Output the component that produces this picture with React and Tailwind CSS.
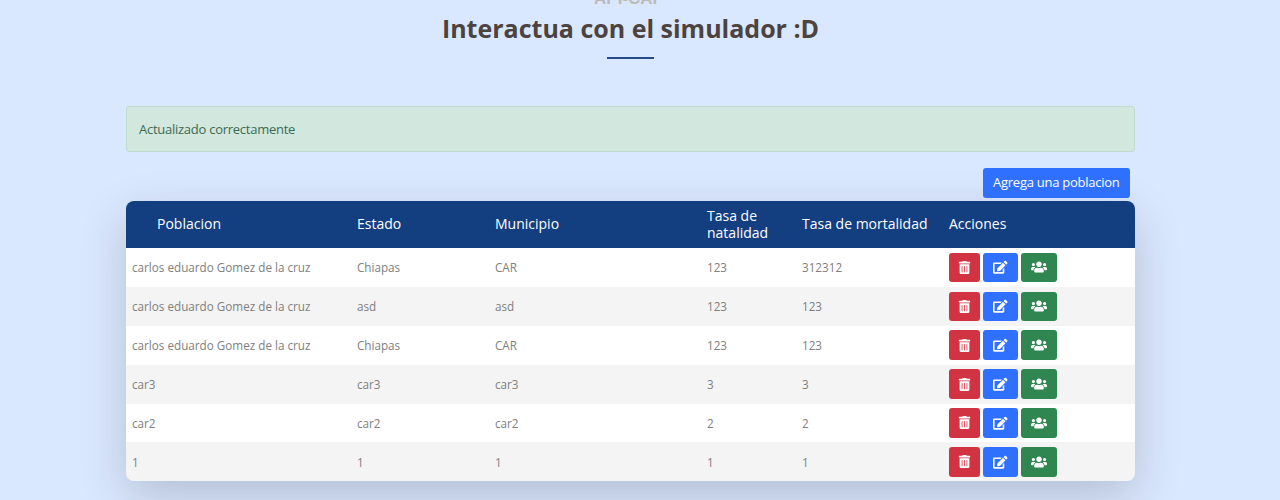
import { FaTrashAlt, FaEdit, FaUsers } from "react-icons/fa";

const columns =
  "grid grid-cols-[225px_138px_212px_95px_147px_1fr] items-center pl-[6px]";

const rows = [
  ["carlos eduardo Gomez de la cruz", "Chiapas", "CAR", "123", "312312"],
  ["carlos eduardo Gomez de la cruz", "asd", "asd", "123", "123"],
  ["carlos eduardo Gomez de la cruz", "Chiapas", "CAR", "123", "123"],
  ["car3", "car3", "car3", "3", "3"],
  ["car2", "car2", "car2", "2", "2"],
  ["1", "1", "1", "1", "1"],
];

function Actions() {
  return (
    <div className="flex gap-[3px] text-white">
      <button className="flex h-[29.5px] w-[31px] items-center justify-center rounded-[3px] bg-[#d23343]">
        <FaTrashAlt size={13} />
      </button>
      <button className="flex h-[29.5px] w-[34.5px] items-center justify-center rounded-[3px] bg-[#2f70ff]">
        <FaEdit size={14.5} />
      </button>
      <button className="flex h-[29.5px] w-[36px] items-center justify-center rounded-[3px] bg-[#308650]">
        <FaUsers size={16} />
      </button>
    </div>
  );
}

export default function App() {
  return (
    <div className="h-[500px] overflow-hidden bg-[#dae8ff] font-['Open_Sans','Noto_Sans',sans-serif]">
      <header className="flex flex-col items-center pr-[19px]">
        <div className="-mt-[11px] h-[19px] pr-[3px] font-['Liberation_Sans',sans-serif] text-[17px] leading-[20px] font-bold text-[#bdbab8]">
          API-CAP
        </div>
        <h2 className="mt-1 h-8 text-[25px] leading-8 font-bold whitespace-nowrap text-[#4c4340]">
          Interactua con el simulador :D
        </h2>
        <div className="mt-[13px] h-[2px] w-[47px] bg-[#264b86]" />
      </header>
      <main className="ml-[126px] w-[1009px] pt-[47px]">
        <div className="flex h-[46px] items-center rounded-[3px] border border-[#bfdccf] bg-[#d2e7dd] pt-px pl-3 text-[13px] tracking-[-0.26px] text-[#3c6b54]">
          Actualizado correctamente
        </div>
        <div className="mt-4 flex justify-end pr-[5px]">
          <button className="h-[29.5px] w-[147.5px] rounded-[3px] bg-[#2f70ff] text-[13px] tracking-[-0.26px] whitespace-nowrap text-white">
            Agrega una poblacion
          </button>
        </div>
        <section className="mt-[3.7px] overflow-hidden rounded-[8px] shadow-[0_16px_47px_rgba(0,0,0,0.175)]">
          <div className={`${columns} h-[46.8px] bg-[#133e80] text-[14px] leading-[16.5px] text-white`}>
            <div className="pl-[25px]">Poblacion</div>
            <div>Estado</div>
            <div>Municipio</div>
            <div className="w-[70px]">Tasa de natalidad</div>
            <div className="whitespace-nowrap">Tasa de mortalidad</div>
            <div>Acciones</div>
          </div>
          {rows.map((row, i) => (
            <div
              key={i}
              className={`${columns} h-[38.9px] text-[11.7px] text-[#808080] ${i % 2 ? "bg-[#f4f4f4]" : "bg-white"}`}
            >
              {row.map((cell, j) => (
                <div key={j} className="pt-[1px] whitespace-nowrap">{cell}</div>
              ))}
              <Actions />
            </div>
          ))}
        </section>
      </main>
    </div>
  );
}
